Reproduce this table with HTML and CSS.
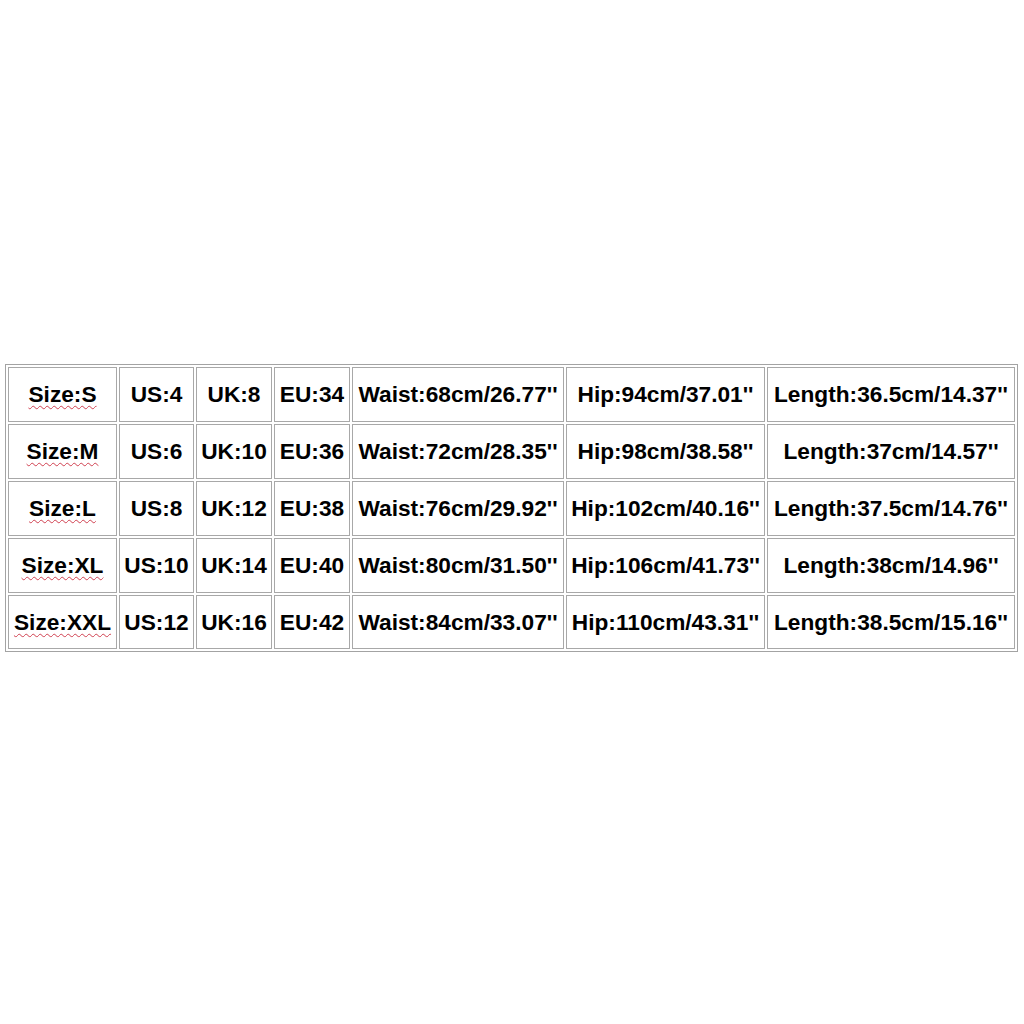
FILE: index.html
```html
<!DOCTYPE html>
<html>
<head>
<meta charset="utf-8">
<link rel="stylesheet" href="styles.css">
</head>
<body>
<table class="size-table">
  <colgroup>
    <col class="c1"><col class="c2"><col class="c3"><col class="c4"><col class="c5"><col class="c6"><col class="c7">
  </colgroup>
  <tr>
    <td><span class="spell">Size:S</span></td><td>US:4</td><td>UK:8</td><td>EU:34</td><td>Waist:68cm/26.77''</td><td>Hip:94cm/37.01''</td><td>Length:36.5cm/14.37''</td>
  </tr>
  <tr>
    <td><span class="spell">Size:M</span></td><td>US:6</td><td>UK:10</td><td>EU:36</td><td>Waist:72cm/28.35''</td><td>Hip:98cm/38.58''</td><td>Length:37cm/14.57''</td>
  </tr>
  <tr>
    <td><span class="spell">Size:L</span></td><td>US:8</td><td>UK:12</td><td>EU:38</td><td>Waist:76cm/29.92''</td><td>Hip:102cm/40.16''</td><td>Length:37.5cm/14.76''</td>
  </tr>
  <tr>
    <td><span class="spell">Size:XL</span></td><td>US:10</td><td>UK:14</td><td>EU:40</td><td>Waist:80cm/31.50''</td><td>Hip:106cm/41.73''</td><td>Length:38cm/14.96''</td>
  </tr>
  <tr class="last">
    <td><span class="spell">Size:XXL</span></td><td>US:12</td><td>UK:16</td><td>EU:42</td><td>Waist:84cm/33.07''</td><td>Hip:110cm/43.31''</td><td>Length:38.5cm/15.16''</td>
  </tr>
</table>
</body>
</html>
```
FILE: styles.css
```css
html, body {
  margin: 0;
  padding: 0;
  background: #ffffff;
}
body {
  padding-top: 364px;
  padding-left: 5px;
}
.size-table {
  width: 1013px;
  table-layout: fixed;
  border-collapse: separate;
  border-spacing: 2px;
  border: 1px solid #a3a3a3;
  font-family: "Liberation Sans", Arial, sans-serif;
  font-weight: bold;
  font-size: 22.7px;
  color: #000000;
}
.c1 { width: 109px; }
.c2 { width: 75px; }
.c3 { width: 76px; }
.c4 { width: 76px; }
.c5 { width: 212px; }
.c6 { width: 199px; }
.c7 { width: 248px; }
.size-table td {
  border: 1px solid #a8a8a8;
  height: 53px;
  padding: 0;
  text-align: center;
  vertical-align: middle;
  white-space: nowrap;
  overflow: visible;
}
.size-table tr.last td {
  height: 52px;
}
.spell {
  text-decoration: underline wavy #d04050;
  text-decoration-thickness: 1px;
  text-underline-offset: 3px;
}
```
